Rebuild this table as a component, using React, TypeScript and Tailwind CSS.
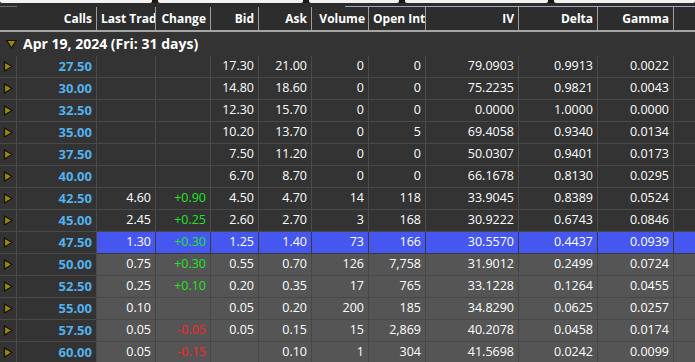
import React from "react";

type Row = {
  k: string;
  lt: string;
  ch: string;
  bid: string;
  ask: string;
  vol: string;
  oi: string;
  iv: string;
  delta: string;
  gamma: string;
  kind: "dark" | "hl" | "light";
};

const rows: Row[] = [
  { k: "27.50", lt: "", ch: "", bid: "17.30", ask: "21.00", vol: "0", oi: "0", iv: "79.0903", delta: "0.9913", gamma: "0.0022", kind: "dark" },
  { k: "30.00", lt: "", ch: "", bid: "14.80", ask: "18.60", vol: "0", oi: "0", iv: "75.2235", delta: "0.9821", gamma: "0.0043", kind: "dark" },
  { k: "32.50", lt: "", ch: "", bid: "12.30", ask: "15.70", vol: "0", oi: "0", iv: "0.0000", delta: "1.0000", gamma: "0.0000", kind: "dark" },
  { k: "35.00", lt: "", ch: "", bid: "10.20", ask: "13.70", vol: "0", oi: "5", iv: "69.4058", delta: "0.9340", gamma: "0.0134", kind: "dark" },
  { k: "37.50", lt: "", ch: "", bid: "7.50", ask: "11.20", vol: "0", oi: "0", iv: "50.0307", delta: "0.9401", gamma: "0.0173", kind: "dark" },
  { k: "40.00", lt: "", ch: "", bid: "6.70", ask: "8.70", vol: "0", oi: "0", iv: "66.1678", delta: "0.8130", gamma: "0.0295", kind: "dark" },
  { k: "42.50", lt: "4.60", ch: "+0.90", bid: "4.50", ask: "4.70", vol: "14", oi: "118", iv: "33.9045", delta: "0.8389", gamma: "0.0524", kind: "dark" },
  { k: "45.00", lt: "2.45", ch: "+0.25", bid: "2.60", ask: "2.70", vol: "3", oi: "168", iv: "30.9222", delta: "0.6743", gamma: "0.0846", kind: "dark" },
  { k: "47.50", lt: "1.30", ch: "+0.30", bid: "1.25", ask: "1.40", vol: "73", oi: "166", iv: "30.5570", delta: "0.4437", gamma: "0.0939", kind: "hl" },
  { k: "50.00", lt: "0.75", ch: "+0.30", bid: "0.55", ask: "0.70", vol: "126", oi: "7,758", iv: "31.9012", delta: "0.2499", gamma: "0.0724", kind: "light" },
  { k: "52.50", lt: "0.25", ch: "+0.10", bid: "0.20", ask: "0.35", vol: "17", oi: "765", iv: "33.1228", delta: "0.1264", gamma: "0.0455", kind: "light" },
  { k: "55.00", lt: "0.10", ch: "", bid: "0.05", ask: "0.20", vol: "200", oi: "185", iv: "34.8290", delta: "0.0625", gamma: "0.0257", kind: "light" },
  { k: "57.50", lt: "0.05", ch: "-0.05", bid: "0.05", ask: "0.15", vol: "15", oi: "2,869", iv: "40.2078", delta: "0.0458", gamma: "0.0174", kind: "light" },
  { k: "60.00", lt: "0.05", ch: "-0.15", bid: "", ask: "0.10", vol: "1", oi: "304", iv: "41.5698", delta: "0.0242", gamma: "0.0099", kind: "light" },
];

const cols = "grid grid-cols-[17px_80px_59px_55px_48px_53px_57px_57px_93px_79px_76px_1fr]";

function RightArrow() {
  return (
    <svg width="10" height="11" viewBox="0 0 10 11">
      <polygon points="1.5,1 9,5.5 1.5,10" fill="#9a880a" stroke="#151200" strokeWidth="1.2" />
    </svg>
  );
}

function DownArrow() {
  return (
    <svg width="11" height="10" viewBox="0 0 11 10">
      <polygon points="0.8,1.5 10.2,1.5 5.5,9" fill="#9a880a" stroke="#151200" strokeWidth="1.2" />
    </svg>
  );
}

function Cell({ children, bg, color = "text-white", extra = "" }: { children?: React.ReactNode; bg: string; color?: string; extra?: string }) {
  return (
    <div className={`flex items-center justify-end pr-[4px] border-r border-b whitespace-nowrap overflow-hidden ${bg} ${color} ${extra}`}>
      {children}
    </div>
  );
}

export default function App() {
  return (
    <div
      className="w-[695px] h-[362px] overflow-hidden bg-[#333333] text-[12px] leading-none"
      style={{ fontFamily: '"Open Sans", "Noto Sans", sans-serif' }}
    >
      {/* top strip */}
      <div className="h-[7px] bg-[#2b2b2b] flex flex-col">
        <div className="h-[3px] flex gap-[6px] bg-[#1a1a1a]">
          <div className="w-[152px] bg-[#f2f2f2] rounded-b-[2px]" />
          <div className="w-[145px] bg-[#f2f2f2] rounded-b-[2px]" />
          <div className="w-[90px] bg-[#f2f2f2] rounded-b-[2px]" />
          <div className="w-[143px] bg-[#f2f2f2] rounded-b-[2px]" />
          <div className="flex-1 bg-[#f2f2f2] rounded-b-[2px]" />
        </div>
        <div className="flex-1" />
        <div className="h-[1px] flex">
          <div className="w-[17px] bg-[#6a6a6a]" />
          <div className="w-[328px]" />
          <div className="flex-1 bg-[#9aaabb]" />
        </div>
      </div>

      {/* header */}
      <div className={`${cols} h-[23px] bg-[#2d2d2d] font-bold text-white`}>
        <div className="col-span-2 flex items-center justify-end pr-[4px] border-r border-[#9c9c9c]">Calls</div>
        <div className="flex items-center justify-start pl-[4px] border-r border-[#9c9c9c] overflow-hidden whitespace-nowrap">Last Trade</div>
        <div className="flex items-center justify-end pr-[4px] border-r border-[#9c9c9c] overflow-hidden whitespace-nowrap">Change</div>
        <div className="flex items-center justify-end pr-[4px] border-r border-[#9c9c9c]">Bid</div>
        <div className="flex items-center justify-end pr-[4px] border-r border-[#9c9c9c]">Ask</div>
        <div className="flex items-center justify-end pr-[3px] border-r border-[#9c9c9c] overflow-hidden whitespace-nowrap">Volume</div>
        <div className="flex items-center justify-start pl-[4px] border-r border-[#9c9c9c] overflow-hidden whitespace-nowrap">Open Int</div>
        <div className="flex items-center justify-end pr-[4px] border-r border-[#9c9c9c]">IV</div>
        <div className="flex items-center justify-end pr-[4px] border-r border-[#9c9c9c]">Delta</div>
        <div className="flex items-center justify-end pr-[4px] border-r border-[#9c9c9c]">Gamma</div>
        <div />
      </div>
      <div className="h-[2px] bg-[#a6a6a6]" />

      {/* group row */}
      <div className="h-[24px] bg-[#333333] flex items-center gap-[6px] pl-[6px] text-white font-bold text-[14px]">
        <DownArrow />
        <span>Apr 19, 2024 (Fri: 31 days)</span>
      </div>

      {/* rows */}
      {rows.map((r) => {
        const bg =
          r.kind === "hl"
            ? "bg-[#4657f0] border-[#3a3a3a]"
            : r.kind === "light"
            ? "bg-[#555555] border-[#474747]"
            : "bg-[#333333] border-[#4a4a4a]";
        const chColor = r.ch.startsWith("+") ? "text-[#1ee61e]" : "text-[#ff2424]";
        return (
          <div key={r.k} className={`${cols} h-[22px]`}>
            <div className="flex items-center justify-center border-r border-b border-[#4a4a4a] bg-[#333333]">
              <RightArrow />
            </div>
            <Cell bg="bg-[#333333] border-[#4a4a4a]" color="text-[#52b2ee]" extra="font-bold text-[13px]">
              {r.k}
            </Cell>
            <Cell bg={bg} extra="text-[12.5px]">{r.lt}</Cell>
            <Cell bg={bg} color={chColor} extra="text-[12.5px]">{r.ch}</Cell>
            <Cell bg={bg} extra="text-[12.5px]">{r.bid}</Cell>
            <Cell bg={bg} extra="text-[12.5px]">{r.ask}</Cell>
            <Cell bg={bg} extra="text-[12.5px]">{r.vol}</Cell>
            <Cell bg={bg} extra="text-[12.5px]">{r.oi}</Cell>
            <Cell bg={bg} extra="text-[12.5px]">{r.iv}</Cell>
            <Cell bg={bg} extra="text-[12.5px]">{r.delta}</Cell>
            <Cell bg={bg} extra="text-[12.5px]">{r.gamma}</Cell>
            <div className={`border-b ${bg}`} />
          </div>
        );
      })}
    </div>
  );
}
